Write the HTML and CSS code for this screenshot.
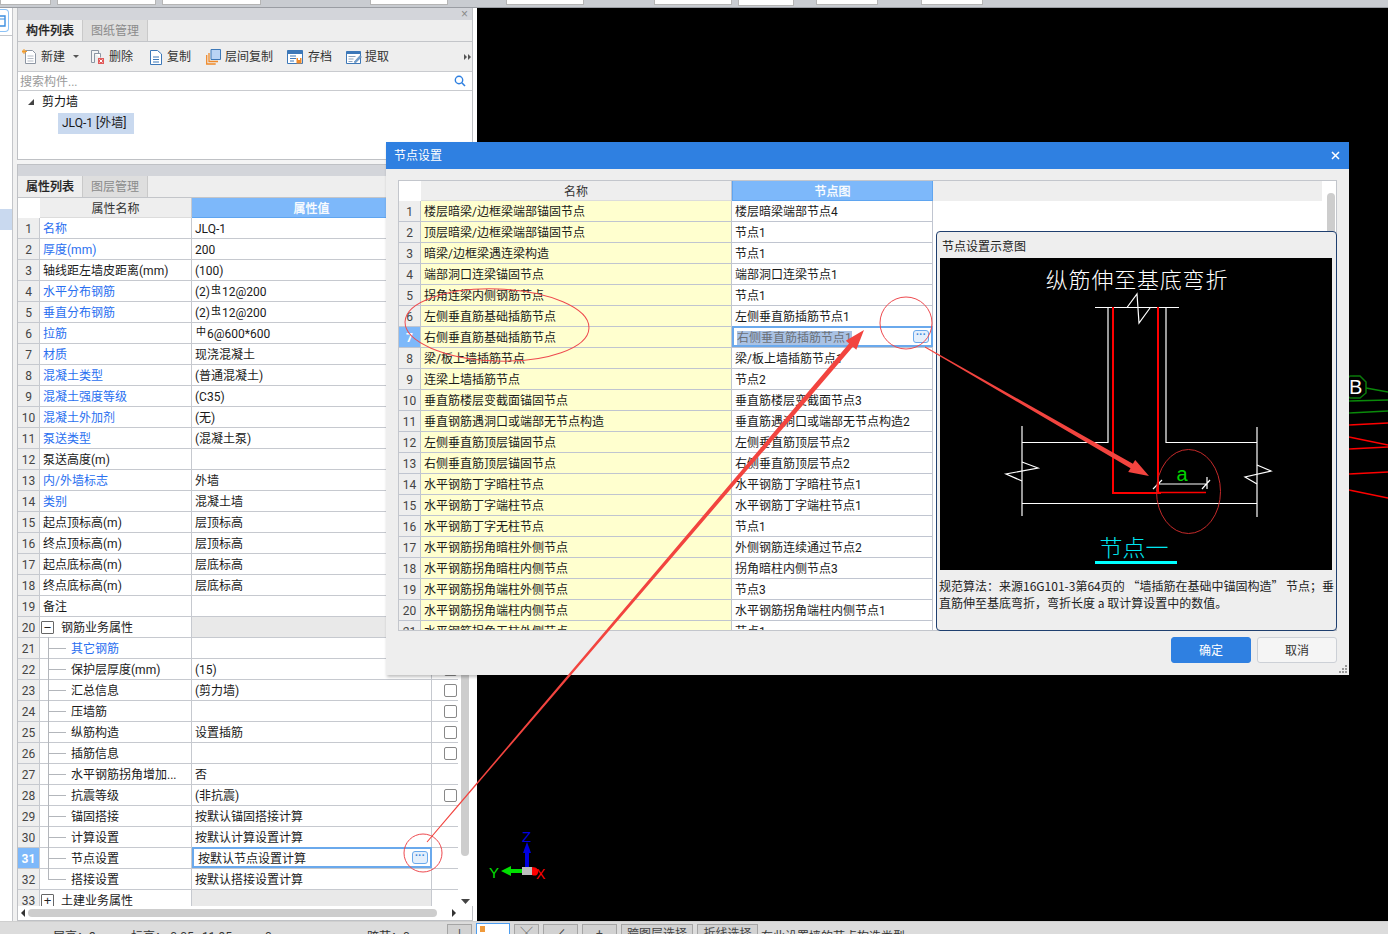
FILE: index.html
```html
<!DOCTYPE html>
<html lang="zh-CN">
<head>
<meta charset="utf-8">
<title>节点设置</title>
<link rel="stylesheet" href="styles.css">
</head>
<body>
<div class="app">
  <div class="topbar">
    <span class="tb w50 first"></span><span class="tb w99"></span><span class="tb w99"></span><span class="tb w78 g109"></span><span class="tb w78 g58"></span><span class="tb w78 g70"></span><span class="tb w56 g6"></span><span class="tb w62 g22"></span><span class="tb w62 g43"></span>
  </div>
  <div class="main">
    <div class="strip">
      <div class="strip-btn"><svg width="7" height="21" viewBox="0 0 7 21"><path d="M0 6h5v10H0" fill="none" stroke="#3d8fe0" stroke-width="1.4"/><path d="M0 9h5" stroke="#3d8fe0"/></svg></div>
      <div class="strip-line"></div>
      <div class="strip-sel"></div>
    </div>
    <div class="side">
      <section class="panel top-panel">
        <div class="phead"><span class="pclose">×</span></div>
        <div class="tabs"><span class="tab on">构件列表</span><span class="tab">图纸管理</span></div>
        <div class="toolbar">
          <span class="tool t-new"><svg width="15" height="16" viewBox="0 0 15 16"><path d="M3.5 1.5h7l3 3v10h-10z" fill="#fff" stroke="#8d96a3"/><path d="M5.500 7h6M5.500 9.500h6M5.500 12h6" stroke="#b5bcc6"/><path d="M2 0v5M0 2.500h5M.5 1l3 3M3.500 1l-3 3" stroke="#f09a2a"/></svg>新建</span>
          <span class="caret"></span>
          <span class="tool t-del"><svg width="15" height="16" viewBox="0 0 15 16"><path d="M1.500 1.500h7v3h-4v9h-3z" fill="#f4f4f4" stroke="#8d96a3"/><path d="M4.500 4.500h6v4" fill="#fff" stroke="#8d96a3"/><path d="M8 9h6v6H8z" fill="#e05a5a"/><path d="M9.500 10.500l3 3M12.500 10.500l-3 3" stroke="#fff"/></svg>删除</span>
          <span class="tool t-copy"><svg width="12" height="16" viewBox="0 0 12 16"><path d="M.5 1.500h7l4 3.500v10.500H.500z" fill="#fff" stroke="#3d78b8"/><path d="M3 8h6M3 10.500h6M3 13h6" stroke="#3d78b8"/></svg>复制</span>
          <span class="tool t-layer"><svg width="15" height="16" viewBox="0 0 15 16"><path d="M.7 6v9h9M3 4v8.500h9" fill="none" stroke="#ef8a2a" stroke-width="1.300"/><path d="M5 .5h9.500v10H5z" fill="#b9d4f5" stroke="#3d78b8"/></svg>层间复制</span>
          <span class="tool t-save"><svg width="16" height="16" viewBox="0 0 16 16"><path d="M.5 1.500h15v13H.5z" fill="#fff" stroke="#3d78b8"/><path d="M.5 1.500h15V5H.5z" fill="#3d78b8"/><path d="M3 7h6M3 9.500h6M3 12h4" stroke="#3d78b8"/><path d="M9.500 9h5v5.500h-5z" fill="#ef8a2a"/><path d="M11 9h2v2h-2z" fill="#fff"/></svg>存档</span>
          <span class="tool t-ext"><svg width="16" height="16" viewBox="0 0 16 16"><path d="M.5 2.500h14v12H.500z" fill="#fff" stroke="#3d78b8"/><path d="M.5 2.500h14V5H.500z" fill="#3d78b8"/><path d="M2.500 7.500h7M2.500 10h5M2.500 12.500h4" stroke="#8da3bb"/><path d="M8 13l6-6.500 1.500 1.500-6 6z" fill="#6f9fd0" stroke="#5a7ea5" stroke-width=".5"/></svg>提取</span>
          <span class="more"><i></i><i></i></span>
        </div>
        <div class="search"><span class="ph">搜索构件...</span><svg width="12" height="12" viewBox="0 0 12 12"><circle cx="5" cy="5" r="3.700" fill="none" stroke="#2f80e1" stroke-width="1.400"/><path d="M7.800 7.800L11 11" stroke="#2f80e1" stroke-width="1.600"/></svg></div>
        <div class="tree">
          <div class="tree-root"><span class="tri"></span>剪力墙</div>
          <div class="tree-leaf"><span>JLQ-1 [外墙]</span></div>
        </div>
      </section>
      <section class="panel prop-panel">
        <div class="phead"></div>
        <div class="tabs"><span class="tab on">属性列表</span><span class="tab">图层管理</span></div>
        <div class="pbody">
          <div class="pgrid">
            <div class="hrow"><span class="rn blank"></span><span class="nm hd">属性名称</span><span class="val hd act">属性值</span><span class="chk hd"></span></div>
            <div class="row"><span class="rn">1</span><span class="nm lk">名称</span><span class="val">JLQ-1</span><span class="chk"></span></div>
            <div class="row"><span class="rn">2</span><span class="nm lk">厚度(mm)</span><span class="val">200</span><span class="chk"></span></div>
            <div class="row"><span class="rn">3</span><span class="nm">轴线距左墙皮距离(mm)</span><span class="val">(100)</span><span class="chk"></span></div>
            <div class="row"><span class="rn">4</span><span class="nm lk">水平分布钢筋</span><span class="val">(2)<sup class="rb">虫</sup>12@200</span><span class="chk"></span></div>
            <div class="row"><span class="rn">5</span><span class="nm lk">垂直分布钢筋</span><span class="val">(2)<sup class="rb">虫</sup>12@200</span><span class="chk"></span></div>
            <div class="row"><span class="rn">6</span><span class="nm lk">拉筋</span><span class="val"><sup class="rb">中</sup>6@600*600</span><span class="chk"></span></div>
            <div class="row"><span class="rn">7</span><span class="nm lk">材质</span><span class="val">现浇混凝土</span><span class="chk"></span></div>
            <div class="row"><span class="rn">8</span><span class="nm lk">混凝土类型</span><span class="val">(普通混凝土)</span><span class="chk"></span></div>
            <div class="row"><span class="rn">9</span><span class="nm lk">混凝土强度等级</span><span class="val">(C35)</span><span class="chk"></span></div>
            <div class="row"><span class="rn">10</span><span class="nm lk">混凝土外加剂</span><span class="val">(无)</span><span class="chk"></span></div>
            <div class="row"><span class="rn">11</span><span class="nm lk">泵送类型</span><span class="val">(混凝土泵)</span><span class="chk"></span></div>
            <div class="row"><span class="rn">12</span><span class="nm">泵送高度(m)</span><span class="val"></span><span class="chk"></span></div>
            <div class="row"><span class="rn">13</span><span class="nm lk">内/外墙标志</span><span class="val">外墙</span><span class="chk"></span></div>
            <div class="row"><span class="rn">14</span><span class="nm lk">类别</span><span class="val">混凝土墙</span><span class="chk"></span></div>
            <div class="row"><span class="rn">15</span><span class="nm">起点顶标高(m)</span><span class="val">层顶标高</span><span class="chk"></span></div>
            <div class="row"><span class="rn">16</span><span class="nm">终点顶标高(m)</span><span class="val">层顶标高</span><span class="chk"></span></div>
            <div class="row"><span class="rn">17</span><span class="nm">起点底标高(m)</span><span class="val">层底标高</span><span class="chk"></span></div>
            <div class="row"><span class="rn">18</span><span class="nm">终点底标高(m)</span><span class="val">层底标高</span><span class="chk"></span></div>
            <div class="row"><span class="rn">19</span><span class="nm">备注</span><span class="val"></span><span class="chk"></span></div>
            <div class="row"><span class="rn">20</span><span class="nm grp"><i class="box">−</i>钢筋业务属性</span><span class="val gv"></span><span class="chk"></span></div>
            <div class="row"><span class="rn">21</span><span class="nm kid lk">其它钢筋</span><span class="val"></span><span class="chk"></span></div>
            <div class="row"><span class="rn">22</span><span class="nm kid">保护层厚度(mm)</span><span class="val">(15)</span><span class="chk"><i class="cb"></i></span></div>
            <div class="row"><span class="rn">23</span><span class="nm kid">汇总信息</span><span class="val">(剪力墙)</span><span class="chk"><i class="cb"></i></span></div>
            <div class="row"><span class="rn">24</span><span class="nm kid">压墙筋</span><span class="val"></span><span class="chk"><i class="cb"></i></span></div>
            <div class="row"><span class="rn">25</span><span class="nm kid">纵筋构造</span><span class="val">设置插筋</span><span class="chk"><i class="cb"></i></span></div>
            <div class="row"><span class="rn">26</span><span class="nm kid">插筋信息</span><span class="val"></span><span class="chk"><i class="cb"></i></span></div>
            <div class="row"><span class="rn">27</span><span class="nm kid">水平钢筋拐角增加...</span><span class="val">否</span><span class="chk"></span></div>
            <div class="row"><span class="rn">28</span><span class="nm kid">抗震等级</span><span class="val">(非抗震)</span><span class="chk"><i class="cb"></i></span></div>
            <div class="row"><span class="rn">29</span><span class="nm kid">锚固搭接</span><span class="val">按默认锚固搭接计算</span><span class="chk"></span></div>
            <div class="row"><span class="rn">30</span><span class="nm kid">计算设置</span><span class="val">按默认计算设置计算</span><span class="chk"></span></div>
            <div class="row"><span class="rn act">31</span><span class="nm kid">节点设置</span><span class="val edit">按默认节点设置计算<i class="dots">···</i></span><span class="chk"></span></div>
            <div class="row"><span class="rn">32</span><span class="nm kid last">搭接设置</span><span class="val">按默认搭接设置计算</span><span class="chk"></span></div>
            <div class="row"><span class="rn">33</span><span class="nm grp"><i class="box">+</i>土建业务属性</span><span class="val gv"></span><span class="chk"></span></div>
          </div>
          <div class="vbar"><div class="vthumb"></div><svg class="down" width="9" height="5" viewBox="0 0 9 5"><path d="M0 0h9L4.500 5z" fill="#444"/></svg></div>
        </div>
        <div class="hbar"><span class="al"></span><div class="hthumb"></div><span class="ar"></span></div>
      </section>
    </div>
    <div class="gutter"></div>
    <div class="canvas">
      <svg class="cad" width="911" height="913" viewBox="477 8 911 913">
        <polygon points="1350,376 1360,376 1366,382 1366,393 1360,398 1350,398 1344,393 1344,382" fill="none" stroke="#0a7a0a" stroke-width="1.500"/>
        <text x="1349" y="394" class="cad-b">B</text>
        <g stroke="#0a8a0a" stroke-width="1.300"><path d="M1366 388L1388 392M1349 401L1388 400M1349 413L1388 411"/></g>
        <g stroke="#f00" stroke-width="1.300"><path d="M1349 425L1388 423M1349 437L1388 445M1349 449L1388 447M1349 474L1388 472M1349 490L1388 498"/></g>
        <path d="M527 867V852" stroke="#0000e0" stroke-width="4"/>
        <path d="M527 842l4 11h-8z" fill="#0000e0"/>
        <path d="M522 871H510" stroke="#00e000" stroke-width="4"/>
        <path d="M501 871l10-5v10z" fill="#00e000"/>
        <path d="M532 867c5 0 7 3 6 6s-3 3-6 2z" fill="#f00"/>
        <rect x="522" y="867" width="10" height="8" fill="#bdbdbd"/>
        <text x="522" y="842" class="cad-z">Z</text>
        <text x="489" y="878" class="cad-y">Y</text>
        <text x="536" y="879" class="cad-x">X</text>
      </svg>
    </div>
  </div>
  <div class="status">
    <span class="st s1">层高：3</span><span class="st s2">标高：-0.05~11.95</span><span class="st s3">0</span><span class="st s4">跨节：0</span>
    <span class="sb b0">|</span><span class="sb b1"><i></i></span><span class="sb b2">╳</span><span class="sb b3">∠</span><span class="sb b4">+</span><span class="sb b5">跨图层选择</span><span class="sb b6">折线选择</span><span class="st s5">在此设置墙的节点构造类型</span>
  </div>

  <div class="dialog">
    <div class="dtitle"><span>节点设置</span><svg width="9" height="9" viewBox="0 0 9 9"><path d="M1 1l7 7M8 1L1 8" stroke="#fff" stroke-width="1.500"/></svg></div>
    <div class="dbody">
      <div class="dtable">
        <div class="dgrid">
          <div class="dhead"><span class="drn blank"></span><span class="dnm hd">名称</span><span class="dvl hd act">节点图</span></div>
          <div class="drow"><span class="drn">1</span><span class="dnm">楼层暗梁/边框梁端部锚固节点</span><span class="dvl">楼层暗梁端部节点4</span></div>
          <div class="drow"><span class="drn">2</span><span class="dnm">顶层暗梁/边框梁端部锚固节点</span><span class="dvl">节点1</span></div>
          <div class="drow"><span class="drn">3</span><span class="dnm">暗梁/边框梁遇连梁构造</span><span class="dvl">节点1</span></div>
          <div class="drow"><span class="drn">4</span><span class="dnm">端部洞口连梁锚固节点</span><span class="dvl">端部洞口连梁节点1</span></div>
          <div class="drow"><span class="drn">5</span><span class="dnm">拐角连梁内侧钢筋节点</span><span class="dvl">节点1</span></div>
          <div class="drow"><span class="drn">6</span><span class="dnm">左侧垂直筋基础插筋节点</span><span class="dvl">左侧垂直筋插筋节点1</span></div>
          <div class="drow"><span class="drn act">7</span><span class="dnm">右侧垂直筋基础插筋节点</span><span class="dvl edit"><b>右侧垂直筋插筋节点1</b><i class="dots">···</i></span></div>
          <div class="drow"><span class="drn">8</span><span class="dnm">梁/板上墙插筋节点</span><span class="dvl">梁/板上墙插筋节点1</span></div>
          <div class="drow"><span class="drn">9</span><span class="dnm">连梁上墙插筋节点</span><span class="dvl">节点2</span></div>
          <div class="drow"><span class="drn">10</span><span class="dnm">垂直筋楼层变截面锚固节点</span><span class="dvl">垂直筋楼层变截面节点3</span></div>
          <div class="drow"><span class="drn">11</span><span class="dnm">垂直钢筋遇洞口或端部无节点构造</span><span class="dvl">垂直筋遇洞口或端部无节点构造2</span></div>
          <div class="drow"><span class="drn">12</span><span class="dnm">左侧垂直筋顶层锚固节点</span><span class="dvl">左侧垂直筋顶层节点2</span></div>
          <div class="drow"><span class="drn">13</span><span class="dnm">右侧垂直筋顶层锚固节点</span><span class="dvl">右侧垂直筋顶层节点2</span></div>
          <div class="drow"><span class="drn">14</span><span class="dnm">水平钢筋丁字暗柱节点</span><span class="dvl">水平钢筋丁字暗柱节点1</span></div>
          <div class="drow"><span class="drn">15</span><span class="dnm">水平钢筋丁字端柱节点</span><span class="dvl">水平钢筋丁字端柱节点1</span></div>
          <div class="drow"><span class="drn">16</span><span class="dnm">水平钢筋丁字无柱节点</span><span class="dvl">节点1</span></div>
          <div class="drow"><span class="drn">17</span><span class="dnm">水平钢筋拐角暗柱外侧节点</span><span class="dvl">外侧钢筋连续通过节点2</span></div>
          <div class="drow"><span class="drn">18</span><span class="dnm">水平钢筋拐角暗柱内侧节点</span><span class="dvl">拐角暗柱内侧节点3</span></div>
          <div class="drow"><span class="drn">19</span><span class="dnm">水平钢筋拐角端柱外侧节点</span><span class="dvl">节点3</span></div>
          <div class="drow"><span class="drn">20</span><span class="dnm">水平钢筋拐角端柱内侧节点</span><span class="dvl">水平钢筋拐角端柱内侧节点1</span></div>
          <div class="drow"><span class="drn">21</span><span class="dnm">水平钢筋拐角无柱外侧节点</span><span class="dvl">节点1</span></div>
        </div>
        <div class="dright">
          <div class="drhead"></div>
          <div class="drbar"></div>
        </div>
        <div class="node">
          <div class="node-title">节点设置示意图</div>
          <svg class="node-pic" width="392" height="312" viewBox="0 0 392 312">
            <rect width="392" height="312" fill="#000"/>
            <text x="197" y="30" class="pic-title">纵筋伸至基底弯折</text>
            <g fill="none" stroke="#fff" stroke-width="1.200">
              <path d="M155 49.500H239"/>
              <path d="M187 49.500L197 36L199 65L210 50"/>
              <path d="M168 49.500V184.500H82"/>
              <path d="M226 49.500V184.500H317"/>
              <path d="M82 168V258"/>
              <path d="M317 169V259"/>
              <path d="M82 245.500H317"/>
              <path d="M82 204L98 210L66 216L82 223"/>
              <path d="M317 207L331 213L305 219L317 226"/>
              <path d="M218 226H267M213 231L222 222M262 231L270 222M267 219V231"/>
            </g>
            <g fill="none" stroke="#f00">
              <path d="M173 49V235H221" stroke-width="2"/>
              <path d="M218 49V235" stroke-width="2"/>
              <path d="M218 234.500H266" stroke-width="1.600"/>
            </g>
            <text x="242" y="223" class="pic-a">a</text>
            <text x="194" y="298" class="pic-node">节点一</text>
            <rect x="155" y="303" width="82" height="3" fill="#0ff"/>
          </svg>
          <p class="node-desc">规范算法：来源16G101-3第64页的 “墙插筋在基础中锚固构造” 节点；垂<br>直筋伸至基底弯折，弯折长度 a 取计算设置中的数值。</p>
        </div>
      </div>
      <div class="dfoot">
        <button class="btn primary" type="button">确定</button>
        <button class="btn" type="button">取消</button>
      </div>
      <div class="grip"><i></i><i></i><i></i><i></i><i></i><i></i></div>
    </div>
  </div>

  <svg class="annot" width="1388" height="934" viewBox="0 0 1388 934">
    <g fill="none" stroke="#ee4a4f" stroke-width="1">
      <ellipse cx="497" cy="325" rx="92" ry="36" transform="rotate(2 497 325)"/>
      <circle cx="906" cy="323" r="26"/>
      <circle cx="423" cy="853" r="19"/>
      <ellipse cx="1188.500" cy="491.500" rx="32" ry="42" stroke="#c42a2a"/>
    </g>
    <g fill="#f2443f">
      <polygon points="427.400,842.300 852.900,346.800 856.300,349.700 864,330 845.700,340.700 849.100,343.600 426.600,841.700"/>
      <polygon points="924.800,347.400 1130.500,468.200 1128.200,472.100 1149,476 1135.200,459.900 1132.900,463.800 925.200,346.600"/>
    </g>
  </svg>
</div>
</body>
</html>
```
FILE: styles.css
```css
* { box-sizing: border-box; }
html, body { margin: 0; padding: 0; background: #000; }
body { font: 12px/16px Roboto, "Noto Sans CJK SC", sans-serif; color: #1a1a1a; }
i { font-style: normal; }
.app { position: relative; width: 1388px; height: 934px; overflow: hidden; display: flex; flex-direction: column; }

/* top strip */
.topbar { height: 8px; flex: none; display: flex; align-items: flex-start; background: #c9ccd1; border-bottom: 1px solid #9a9da3; }
.tb { height: 5px; background: #fff; border: 1px solid #b5b5b5; border-top: 0; flex: none; margin-left: 6px; }
.tb.first { margin-left: 0; }
.w50 { width: 51px; } .w99 { width: 99px; } .w78 { width: 78px; } .w56 { width: 56px; } .w62 { width: 62px; }
.g109 { margin-left: 109px; } .g58 { margin-left: 58px; } .g70 { margin-left: 70px; } .g6 { margin-left: 6px; height: 6px; } .g22 { margin-left: 22px; } .g43 { margin-left: 43px; }

.main { flex: 1; min-height: 0; display: flex; }

/* far-left strip */
.strip { width: 17px; flex: none; background: #f1f1f1; display: flex; flex-direction: column; position: relative; }
.strip::before { content: ""; position: absolute; left: 12px; top: 0; bottom: 0; width: 1px; background: #c4c6ca; }
.strip::after { content: ""; position: absolute; left: 0; top: 0; bottom: 0; width: 12px; background: #fff; z-index: 0; }
.strip > div { position: relative; z-index: 1; }
.strip-btn { width: 9px; height: 23px; margin-top: 1px; background: #fff; border: 1px solid #8cc2f6; border-left: 0; border-radius: 0 4px 4px 0; flex: none; }
.strip-btn svg { display: block; }
.strip-line { width: 12px; height: 1px; margin-top: 3px; background: #c4c6ca; flex: none; }
.strip-sel { width: 12px; height: 21px; margin-top: 173px; background: #c9d9ef; flex: none; }

.side { width: 456px; flex: none; display: flex; flex-direction: column; gap: 4px; background: #f4f4f4; }
.gutter { width: 4px; flex: none; background: #fff; }
.canvas { flex: 1; background: #000; position: relative; overflow: hidden; }
.cad { position: absolute; left: 0; top: 0; }
.cad-b { font: 20px "Liberation Sans", sans-serif; fill: #fff; }
.cad-z { font: 15px "Liberation Sans", sans-serif; fill: #0000e0; }
.cad-y { font: 15px "Liberation Sans", sans-serif; fill: #00e000; }
.cad-x { font: 14px "Liberation Sans", sans-serif; fill: #f00; }

/* panels */
.panel { border: 1px solid #bfc1c5; background: #fff; display: flex; flex-direction: column; }
.top-panel { height: 152px; flex: none; border-top-width: 0; }
.prop-panel { flex: 1; min-height: 0; }
.phead { height: 12px; flex: none; background: #d3d5da; position: relative; }
.prop-panel .phead { height: 11px; }
.pclose { position: absolute; right: 4px; top: -1px; font: 12px/14px "Liberation Sans", sans-serif; color: #888; }
.tabs { height: 22px; flex: none; display: flex; background: #eee; border-bottom: 1px solid #c3c5c9; }
.tab { width: 65px; text-align: center; line-height: 22px; color: #8b8b8b; background: #dedede; border-right: 1px solid #c9c9c9; font-size: 12px; }
.tab.on { color: #222; background: #eee; font-weight: 500; -webkit-text-stroke: .2px #222; }

.toolbar { height: 30px; flex: none; display: flex; align-items: center; background: #eee; border-bottom: 1px solid #c9cbcf; position: relative; padding-left: 4px; color: #333; }
.tool { display: flex; align-items: center; gap: 4px; flex: none; }
.tool svg { flex: none; }
.caret { width: 0; height: 0; margin-left: 8px; border: 3px solid transparent; border-top-color: #555; border-bottom: 0; flex: none; }
.t-del { margin-left: 11px; gap: 4px; }
.t-copy { margin-left: 17px; gap: 5px; }
.t-layer { margin-left: 15px; gap: 4px; }
.t-save { margin-left: 14px; gap: 5px; }
.t-ext { margin-left: 14px; gap: 3px; }
.more { position: absolute; right: 1px; top: 12px; display: flex; gap: 1px; }
.more i { width: 0; height: 0; border-left: 3px solid #555; border-top: 3px solid transparent; border-bottom: 3px solid transparent; }

.search { height: 19px; flex: none; display: flex; align-items: center; justify-content: space-between; padding: 0 6px 0 2px; border-bottom: 1px solid #c9cbcf; background: #fff; }
.ph { color: #9a9a9a; margin-top: 2px; }
.tree { flex: 1; background: #fff; padding-top: 2px; }
.tree-root { height: 19px; line-height: 19px; padding-left: 24px; position: relative; color: #111; }
.tri { position: absolute; left: 10px; top: 6px; width: 0; height: 0; border-left: 6px solid transparent; border-bottom: 6px solid #444; }
.tree-leaf { padding-left: 40px; margin-top: 1px; }
.tree-leaf span { display: inline-block; width: 76px; height: 21px; line-height: 21px; padding-left: 4px; background: #c9d9ef; white-space: nowrap; }

/* property grid */
.pbody { flex: 1; min-height: 0; display: flex; position: relative; }
.pgrid { width: 440px; flex: none; overflow: hidden; background: #fff; }
.hrow { height: 20px; display: flex; }
.row { height: 21px; display: flex; border-bottom: 1px solid #c6c9cf; }
.rn { width: 22px; flex: none; background: #eee; border-right: 1px solid #c6c9cf; text-align: center; color: #444; line-height: 22px; }
.rn.blank { background: #fff; border: 0; }
.rn.act { background: #7db8fa; color: #fff; font-weight: 700; }
.nm { width: 152px; flex: none; border-right: 1px solid #c6c9cf; padding-left: 3px; line-height: 22px; white-space: nowrap; overflow: hidden; position: relative; }
.val { width: 240px; flex: none; border-right: 1px solid #c6c9cf; padding-left: 3px; line-height: 22px; white-space: nowrap; position: relative; }
.chk { width: 26px; flex: none; display: flex; align-items: center; justify-content: center; padding-left: 10px; }
.hd { background: #eee; text-align: center; color: #333; border-bottom: 1px solid #dcdcdc; padding: 0; line-height: 22px; }
.hd.act { background: #7db8fa; color: #fff; border-bottom: 1px solid #5fa5f0; -webkit-text-stroke: .3px #fff; }
.lk { color: #2a6ff0; }
.rb { font-size: 10px; line-height: 0; vertical-align: 3px; color: #111; margin: 0 1px; }
.gv { background: #e9e9e9; }
.grp { padding: 2px 0 0 1px; display: flex; align-items: center; gap: 7px; }
.box { width: 13px; height: 13px; flex: none; margin-top: -2px; border: 1px solid #666; border-radius: 1px; display: flex; align-items: center; justify-content: center; font: 13px/11px "Liberation Sans", sans-serif; color: #222; background: #fff; }
.kid { padding-left: 31px; overflow: visible; }
.kid::before { content: ""; position: absolute; left: 8px; top: -1px; bottom: -1px; width: 1px; background: #b3b6bb; }
.kid::after { content: ""; position: absolute; left: 9px; top: 10px; width: 17px; height: 1px; background: #b3b6bb; }
.kid.last::before { bottom: 9px; }
.cb { width: 13px; height: 13px; border: 1px solid #888; border-radius: 2px; background: #fff; display: block; }
.val.edit { border: 2px solid #6aa9ec; padding-left: 4px; line-height: 20px; margin-top: -1px; height: 21px; }
.dots { position: absolute; right: 2px; top: 2px; width: 16px; height: 13px; border: 1px solid #6aa9ec; border-radius: 3px; background: #e3effc; color: #3a86d8; font: 700 10px/8px "Liberation Sans", sans-serif; text-align: center; letter-spacing: 0; }
.vbar { width: 15px; flex: none; position: relative; background: #fff; }
.vthumb { position: absolute; left: 3px; top: 0; width: 8px; height: 658px; background: #cdcdcd; border-radius: 0 0 4px 4px; }
.down { position: absolute; left: 3px; top: 701px; display: block; }
.hbar { height: 14px; flex: none; background: #fff; display: flex; align-items: center; padding-left: 3px; }
.al { width: 0; height: 0; border: 4px solid transparent; border-right: 4px solid #333; border-left: 0; flex: none; }
.ar { width: 0; height: 0; border: 4px solid transparent; border-left: 4px solid #333; border-right: 0; flex: none; margin-left: 15px; }
.hthumb { width: 409px; height: 8px; margin-left: 3px; background: #cdcdcd; border-radius: 4px; flex: none; }

/* status bar */
.status { height: 13px; flex: none; background: #dcdcdc; display: flex; overflow: hidden; position: relative; border-top: 1px solid #cfcfcf; }
.st { flex: none; margin-top: 7px; color: #333; white-space: nowrap; }
.s1 { margin-left: 53px; width: 78px; }
.s2 { width: 134px; }
.s3 { width: 102px; }
.s4 { width: 80px; }
.s5 { margin-left: 3px; }
.sb { flex: none; height: 20px; margin-top: 2px; margin-left: 4px; border: 1px solid #a5a5a5; background: #d2d2d2; text-align: center; color: #444; white-space: nowrap; line-height: 18px; }
.b0 { width: 25px; margin-left: 0; }
.b1 { width: 34px; background: #fff; border: 1px solid #4a9cf0; margin-top: 1px; position: relative; }
.b1 i { position: absolute; left: 3px; top: 2px; width: 5px; height: 6px; background: #f09a3a; }
.b2 { width: 25px; }
.b3 { width: 35px; }
.b4 { width: 35px; }
.b5 { width: 72px; }
.b6 { width: 61px; }

/* dialog */
.dialog { position: absolute; left: 386px; top: 142px; width: 963px; height: 533px; background: #eee; display: flex; flex-direction: column; box-shadow: 1px 2px 3px rgba(0,0,0,.25); }
.dtitle { height: 27px; flex: none; background: #2f80e1; color: #fff; display: flex; align-items: center; justify-content: space-between; padding: 0 9px 0 8px; }
.dbody { flex: 1; min-height: 0; padding: 11px 12px 0; position: relative; display: flex; flex-direction: column; }
.dtable { width: 939px; height: 451px; flex: none; border: 1px solid #c3c6cc; position: relative; display: flex; background: #fff; }
.dgrid { width: 534px; flex: none; overflow: hidden; }
.dhead { height: 20px; display: flex; }
.drow { height: 21px; display: flex; border-bottom: 1px solid #c0c5d0; }
.drn { width: 22px; flex: none; background: #eee; border-right: 1px solid #c0c5d0; text-align: center; color: #444; line-height: 22px; }
.drn.blank { background: #fff; border: 0; }
.drn.act { background: #7db8fa; color: #fff; font-weight: 700; }
.dnm { width: 311px; flex: none; background: #ffffcf; border-right: 1px solid #c0c5d0; padding-left: 3px; line-height: 22px; white-space: nowrap; }
.dvl { width: 201px; flex: none; background: #fff; border-right: 1px solid #c0c5d0; padding-left: 3px; line-height: 22px; white-space: nowrap; position: relative; }
.dhead .hd { line-height: 22px; padding: 0; }
.dhead .dnm { background: #eee; border-right: 1px solid #c0c5d0; }
.dhead .dvl { background: #7db8fa; color: #fff; border: 1px solid #5fa5f0; border-top: 0; }
.dvl.edit { border: 2px solid #6aa9ec; padding-left: 3px; line-height: 20px; margin-top: -1px; height: 21px; background: #fff; }
.dvl.edit b { font-weight: 400; color: #6b7078; background: #a9c2e4; }
.dright { flex: 1; position: relative; }
.drhead { width: 389px; height: 20px; background: #eee; }
.drbar { position: absolute; right: 1px; top: 12px; width: 8px; height: 60px; background: #cdcdcd; border-radius: 4px 4px 0 0; }
.node { position: absolute; left: 537px; top: 50px; right: -1px; bottom: -1px; border: 1px solid #1f3f6f; border-radius: 4px; background: #eee; padding: 0 3px; }
.node-title { height: 26px; line-height: 30px; padding-left: 2px; color: #222; }
.node-pic { display: block; }
.node-desc { margin: 7px 0 0 -1px; font: 12px/17px "Noto Sans CJK SC", sans-serif; white-space: nowrap; color: #222; }
.pic-title { font: 300 22px "Noto Sans CJK SC", sans-serif; fill: #fff; text-anchor: middle; letter-spacing: .8px; }
.pic-a { font: 20px "Liberation Sans", sans-serif; fill: #00d000; text-anchor: middle; }
.pic-node { font: 300 23px "Noto Sans CJK SC", sans-serif; fill: #00e5f0; text-anchor: middle; }
.dfoot { display: flex; justify-content: flex-end; gap: 6px; margin-top: 6px; }
.btn { width: 80px; height: 26px; border: 1px solid #ccd0d6; border-radius: 3px; background: #f5f5f5; color: #333; font: 12px/16px Roboto, "Noto Sans CJK SC", sans-serif; padding: 2px 0 0; }
.btn.primary { background: #2f80e1; border-color: #2f80e1; color: #fff; }
.grip { position: absolute; right: 2px; bottom: 2px; width: 8px; height: 8px; display: grid; grid-template-columns: repeat(3, 2px); grid-auto-rows: 2px; gap: 1px; direction: rtl; }
.grip i { background: #999; width: 2px; height: 2px; }
.grip i:nth-child(1) { grid-column: 1; grid-row: 3; }
.grip i:nth-child(2) { grid-column: 2; grid-row: 3; }
.grip i:nth-child(3) { grid-column: 3; grid-row: 3; }
.grip i:nth-child(4) { grid-column: 1; grid-row: 2; }
.grip i:nth-child(5) { grid-column: 2; grid-row: 2; }
.grip i:nth-child(6) { grid-column: 1; grid-row: 1; }
.annot { position: absolute; left: 0; top: 0; pointer-events: none; }
```
